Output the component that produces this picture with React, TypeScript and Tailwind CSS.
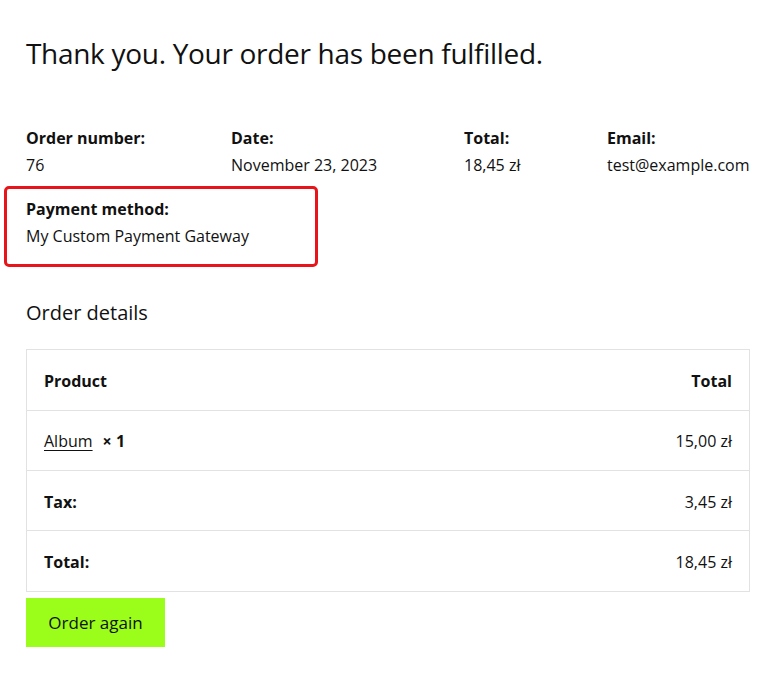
import React from "react";

const font = { fontFamily: '"Segoe UI", "Open Sans", "Noto Sans", sans-serif' };

export default function App() {
  return (
    <div className="min-h-[673px] bg-white text-[#111] px-[26px]" style={font}>
      <h1 className="pt-[33px] text-[28px] leading-[40px] font-normal tracking-[-0.3px]">
        Thank you. Your order has been fulfilled.
      </h1>

      <div className="relative mt-[52px]">
        <ul className="flex text-[16px] leading-[27px]">
          <li className="w-[205px] shrink-0">
            <div className="font-bold">Order number:</div>
            <div>76</div>
          </li>
          <li className="w-[233px] shrink-0">
            <div className="font-bold">Date:</div>
            <div>November 23, 2023</div>
          </li>
          <li className="w-[143px] shrink-0">
            <div className="font-bold">Total:</div>
            <div>18,45 zł</div>
          </li>
          <li className="shrink-0">
            <div className="font-bold">Email:</div>
            <div>test@example.com</div>
          </li>
        </ul>
        <div className="relative mt-[17px] text-[16px] leading-[27px]">
          <div className="font-bold">Payment method:</div>
          <div>My Custom Payment Gateway</div>
          <div className="absolute left-[-22px] top-[-10px] w-[314px] h-[81px] border-[3px] border-[#e8141a] rounded-[5px]" />
        </div>
      </div>

      <h2 className="mt-[48px] text-[20px] leading-[30px] font-normal">Order details</h2>

      <table className="mt-[21px] w-[724px] border-collapse border border-[#e2e2e2] text-[16px]">
        <thead>
          <tr className="h-[61px] border-b border-[#e2e2e2]">
            <th className="pl-[17px] pt-[2px] text-left font-bold">Product</th>
            <th className="pr-[17px] pt-[2px] text-right font-bold">Total</th>
          </tr>
        </thead>
        <tbody>
          <tr className="h-[60px] border-b border-[#e2e2e2]">
            <td className="pl-[17px] text-left">
              <span className="underline underline-offset-[3px]">Album</span>
              <strong className="ml-[10px] font-bold">× 1</strong>
            </td>
            <td className="pr-[17px] text-right">15,00 zł</td>
          </tr>
          <tr className="h-[60px] border-b border-[#e2e2e2]">
            <th className="pl-[17px] pt-[2px] text-left font-bold">Tax:</th>
            <td className="pr-[17px] pt-[2px] text-right">3,45 zł</td>
          </tr>
          <tr className="h-[61px]">
            <th className="pl-[17px] pt-[2px] text-left font-bold">Total:</th>
            <td className="pr-[17px] pt-[2px] text-right">18,45 zł</td>
          </tr>
        </tbody>
      </table>

      <button className="mt-[6px] block h-[49px] w-[139px] bg-[#9bfe1a] text-[17px] text-[#111]">
        Order again
      </button>
    </div>
  );
}
